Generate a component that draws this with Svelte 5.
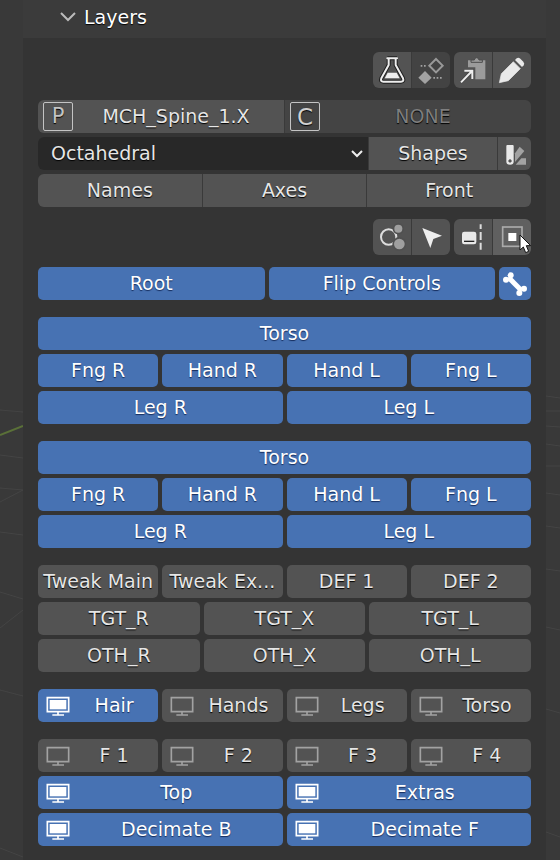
<script>
  let open = $state(true);
  let shape = $state('Octahedral');

  const toolsTop = [
    [{ icon: 'flask', label: 'Test' }, { icon: 'keys', label: 'Keyframes', dim: true }],
    [{ icon: 'paste', label: 'Paste pose' }, { icon: 'pencil', label: 'Edit' }]
  ];
  const toolsBottom = [
    [{ icon: 'orbit', label: 'Bone groups' }, { icon: 'arrow', label: 'Select' }],
    [{ icon: 'mirror', label: 'Mirror' }, { icon: 'frame', label: 'Isolate', hot: true }]
  ];

  const limbs = () => [
    [{ text: 'Torso', on: true }],
    ['Fng R', 'Hand R', 'Hand L', 'Fng L'].map((text) => ({ text, on: true })),
    [{ text: 'Leg R', on: true }, { text: 'Leg L', on: true }]
  ];
  const plain = (names) => names.map((text) => ({ text, on: false }));
  const screens = (names, on) => names.map((text) => ({ text, on, screen: true }));

  let groups = $state([
    limbs(),
    limbs(),
    [
      plain(['Tweak Main', 'Tweak Ex...', 'DEF 1', 'DEF 2']),
      plain(['TGT_R', 'TGT_X', 'TGT_L']),
      plain(['OTH_R', 'OTH_X', 'OTH_L'])
    ],
    [[{ text: 'Hair', on: true, screen: true }, ...screens(['Hands', 'Legs', 'Torso'], false)]],
    [
      screens(['F 1', 'F 2', 'F 3', 'F 4'], false),
      screens(['Top', 'Extras'], true),
      screens(['Decimate B', 'Decimate F'], true)
    ]
  ]);
</script>

{#snippet glyph(name)}
  <svg class="glyph" viewBox="0 0 84 84" aria-hidden="true">
    {#if name === 'flask'}
      <path d="M28 7H57M32 8V27L10 67Q6 77 16 77H69Q79 77 75 67L53 27V8" fill="none" stroke="#1f1f1f" stroke-width="12" stroke-linejoin="round" />
      <path d="M28 7H57M32 8V27L10 67Q6 77 16 77H69Q79 77 75 67L53 27V8" fill="none" stroke="#eee" stroke-width="6" stroke-linejoin="round" stroke-linecap="round" />
      <path d="M29 50H56L65 67H20Z" fill="#eee" />
    {:else if name === 'keys'}
      <path d="M57 9L77 29L57 49L37 29Z" fill="none" stroke="#999" stroke-width="6" />
      <path d="M24 45L44 65L24 84L4 65Z" fill="#a2a2a2" />
      <path d="M11 27h5v5h-5zM21 27h5v5h-5zM49 63h5v5h-5zM59 63h5v5h-5zM69 63h5v5h-5z" fill="#a2a2a2" />
    {:else if name === 'paste'}
      <path d="M27 13H79V70H49V34H27Z" fill="#9b9b9b" />
      <path d="M36 19V12H46Q47 5 53 5T60 12H70V19Z" fill="#9b9b9b" stroke="#4c4c4c" stroke-width="3" />
      <path d="M6 79L39 45M16 44H40V69" fill="none" stroke="#444" stroke-width="10" />
      <path d="M6 79L39 45M16 44H40V69" fill="none" stroke="#eee" stroke-width="6" />
    {:else if name === 'pencil'}
      <path d="M4 80L10 53L46 17L67 38L31 74Z" fill="#e9e9e9" stroke="#e9e9e9" stroke-width="2" stroke-linejoin="round" />
      <path d="M51 12L56 7Q61 3 67 8L76 17Q81 23 77 28L72 33Z" fill="#e9e9e9" />
    {:else if name === 'swatch'}
      <path fill-rule="evenodd" d="M19 15H35Q38 15 38 18V65Q38 74 27 74T16 65V18Q16 15 19 15ZM27 58a5 5 0 1 0 .1 0Z" fill="#e9e9e9" />
      <path d="M42 40L56 20L70 33L42 66Z" fill="#a2a2a2" />
      <path d="M44 74L61 55H75V74Z" fill="#a2a2a2" />
    {:else if name === 'orbit'}
      <circle cx="32" cy="42" r="23" fill="none" stroke="#ddd" stroke-width="6" />
      <circle cx="61" cy="17" r="17" fill="#505050" />
      <circle cx="64" cy="63" r="21" fill="#505050" />
      <circle cx="61" cy="17" r="12" fill="#9f9f9f" />
      <circle cx="64" cy="63" r="16" fill="#9f9f9f" />
    {:else if name === 'arrow'}
      <path d="M16 15L75 38L49 48L40 75Z" fill="#eee" />
    {:else if name === 'mirror'}
      <rect x="9" y="26" width="43" height="38" rx="7" fill="#e9e9e9" />
      <path d="M15 55H46" stroke="#222" stroke-width="4" />
      <path d="M65 4V18M65 27V51M65 59V80" stroke="#ddd" stroke-width="6" />
    {:else if name === 'frame'}
      <rect x="14" y="12" width="58" height="58" fill="none" stroke="#aaa" stroke-width="5" />
      <rect x="31" y="30" width="24" height="24" fill="#fff" />
    {:else if name === 'bone'}
      <path d="M22 22L62 62" stroke="#fff" stroke-width="15" />
      <g fill="#fff">
        <circle cx="15" cy="29" r="9" /><circle cx="29" cy="16" r="9" />
        <circle cx="55" cy="69" r="9" /><circle cx="69" cy="56" r="9" />
      </g>
    {/if}
  </svg>
{/snippet}

{#snippet toolbar(sets)}
  <div class="tools">
    {#each sets as set}
      <div class="joined">
        {#each set as t}
          <button class="tool" class:dim={t.dim} class:hot={t.hot} aria-label={t.label}>
            {@render glyph(t.icon)}
            {#if t.hot}
              <svg class="pointer" viewBox="0 0 39 63" aria-hidden="true">
                <path d="M3 3V48L13 39L20 56L29 52L22 35H35Z" fill="#fff" stroke="#111" stroke-width="3" />
              </svg>
            {/if}
          </button>
        {/each}
      </div>
    {/each}
  </div>
{/snippet}

<main>
  <svg class="grid left" viewBox="0 0 23 860" aria-hidden="true">
    <path d="M0 410L23 412M0 455L23 458M0 488L23 490M0 502L23 490M0 532L23 535M0 592L23 599M0 628L23 610M0 690L23 696M0 848L23 857" />
    <path class="axis" d="M0 435L23 426" />
  </svg>
  <svg class="grid right" viewBox="0 0 14 860" aria-hidden="true">
    <path d="M0 396L14 398M0 411L14 411M0 426L14 427M0 444L14 446M0 466L14 466M0 493L14 495M0 526L14 528M0 569L14 571M0 627L14 630M0 709L14 713M0 832L14 837" />
  </svg>

  <section class="panel">
    <button class="header" aria-expanded={open} onclick={() => (open = !open)}>
      <svg class:shut={!open} viewBox="0 0 16 10" aria-hidden="true"><path d="M1 1L8 8L15 1" fill="none" stroke="#bbb" stroke-width="2" /></svg>
      Layers
    </button>

    {#if open}
      <div class="body">
        {@render toolbar(toolsTop)}

        <div class="group">
          <div class="joined even">
            <button class="bone-name"><span class="mark">P</span><span class="text">MCH_Spine_1.X</span></button>
            <button class="bone-name none"><span class="mark c">C</span><span class="text">NONE</span></button>
          </div>
          <div class="joined display">
            <div class="pick">
              <select aria-label="Display as" bind:value={shape}>
                <option>Octahedral</option>
                <option>Stick</option>
                <option>B-Bone</option>
                <option>Envelope</option>
                <option>Wire</option>
              </select>
              <svg viewBox="0 0 12 8" aria-hidden="true"><path d="M1 1L6 6L11 1" fill="none" stroke="#eee" stroke-width="2" /></svg>
            </div>
            <button>Shapes</button>
            <button class="icon" aria-label="Bone colours">{@render glyph('swatch')}</button>
          </div>
          <div class="joined even">
            <button>Names</button>
            <button>Axes</button>
            <button>Front</button>
          </div>
        </div>

        {@render toolbar(toolsBottom)}

        <div class="row">
          <button class="on">Root</button>
          <button class="on">Flip Controls</button>
          <button class="on small icon" aria-label="Bones">{@render glyph('bone')}</button>
        </div>

        <div class="layers">
          {#each groups as group}
            <div class="group">
              {#each group as row}
                <div class="row">
                  {#each row as layer}
                    <button class:on={layer.on} class:screen={layer.screen} aria-pressed={layer.on} onclick={() => (layer.on = !layer.on)}>
                      {#if layer.screen}
                        <svg class="monitor" viewBox="0 0 72 60" aria-hidden="true">
                          <path d="M4 5H68V47H4ZM36 47V57M19 57H54" fill="none" stroke="currentColor" stroke-width="5" />
                          {#if layer.on}<rect x="11" y="12" width="50" height="28" fill="currentColor" />{/if}
                        </svg>
                      {/if}
                      <span class="text">{layer.text}</span>
                    </button>
                  {/each}
                </div>
              {/each}
            </div>
          {/each}
        </div>
      </div>
    {/if}
  </section>
</main>

<style>
  :global(body) {
    margin: 0;
    background: #393939;
  }
  main {
    position: relative;
    min-height: 100vh;
    display: flex;
    padding: 0 14px 0 23px;
    box-sizing: border-box;
    font-family: 'DejaVu Sans', sans-serif;
    font-size: 19px;
    line-height: 24px;
    color: #e6e6e6;
  }
  .grid {
    position: absolute;
    top: 0;
    height: 860px;
    fill: none;
    stroke: #444;
    stroke-width: 1;
  }
  .left { left: 0; width: 23px; }
  .right { right: 0; width: 14px; }
  .axis {
    stroke: #5a7038;
    stroke-width: 2;
  }
  .panel {
    flex: 1;
    min-width: 0;
    background: #343434;
  }
  button, select {
    appearance: none;
    box-sizing: border-box;
    margin: 0;
    border: 0;
    border-radius: 0;
    padding: 0 0 2px;
    font: inherit;
    color: inherit;
    text-shadow: 0 1px 1px #000;
    white-space: nowrap;
  }
  button {
    display: flex;
    align-items: center;
    justify-content: center;
    height: 33px;
    min-width: 0;
    background: #535353;
  }
  .icon { padding: 0; }
  .header {
    width: 100%;
    height: 38px;
    justify-content: flex-start;
    gap: 8px;
    padding: 0 0 4px 37px;
    background: #3b3b3b;
    color: #fff;
  }
  .header svg { width: 16px; height: 10px; }
  .shut { transform: rotate(-90deg); }
  .body {
    display: flex;
    flex-direction: column;
    gap: 12px;
    padding: 14px 15px;
  }
  .group {
    display: flex;
    flex-direction: column;
    gap: 4px;
  }
  .layers {
    display: flex;
    flex-direction: column;
    gap: 17px;
    padding-top: 5px;
  }
  .row {
    display: flex;
    gap: 4px;
  }
  .row button {
    flex: 1;
    border-radius: 5px;
  }
  .row .small { flex: 0 0 32px; }
  .row .on {
    background: #4772b3;
    color: #fff;
    text-shadow: 0 1px 1px #142c5c;
  }
  .joined {
    display: flex;
    gap: 1px;
    border-radius: 6px;
    overflow: hidden;
    background: #3a3a3a;
  }
  .even button { flex: 1; }
  .tools {
    display: flex;
    justify-content: flex-end;
    gap: 4px;
  }
  .tools .joined { overflow: visible; }
  .tool {
    position: relative;
    width: 38px;
    height: 36px;
    padding: 0;
  }
  .tool:first-child { border-radius: 6px 0 0 6px; }
  .tool:last-child { border-radius: 0 6px 6px 0; }
  .dim { background: #434343; }
  .hot { background: #606060; }
  .glyph {
    flex: none;
    width: 28px;
    height: 28px;
  }
  .pointer {
    position: absolute;
    left: 26px;
    top: 15px;
    width: 13px;
    height: 21px;
  }
  .bone-name { padding: 0 5px 2px; }
  .text { flex: 1; }
  .mark {
    flex: none;
    width: 28px;
    height: 27px;
    margin-top: 2px;
    border: 1px solid #c4c4c4;
    border-radius: 2px;
    font-size: 21px;
    line-height: 27px;
    color: #c4c4c4;
  }
  .c {
    font-size: 23px;
    line-height: 29px;
    color: #d0d0d0;
  }
  .none {
    background: #444;
    color: #7e7e7e;
  }
  .display {
    display: grid;
    grid-template-columns: 1fr 26% 33px;
  }
  .pick {
    display: grid;
    align-items: center;
    background: #282828;
  }
  .pick > * { grid-area: 1 / 1; }
  .pick svg {
    justify-self: end;
    width: 12px;
    height: 8px;
    margin-right: 5px;
    pointer-events: none;
  }
  select {
    width: 100%;
    height: 33px;
    padding: 0 24px 2px 13px;
    background: transparent;
  }
  option { background: #282828; }
  .row .screen { padding-left: 8px; }
  .monitor {
    flex: none;
    width: 24px;
    height: 20px;
    margin-top: 2px;
    color: #a2a2a2;
  }
  .on .monitor { color: #fff; }
</style>
